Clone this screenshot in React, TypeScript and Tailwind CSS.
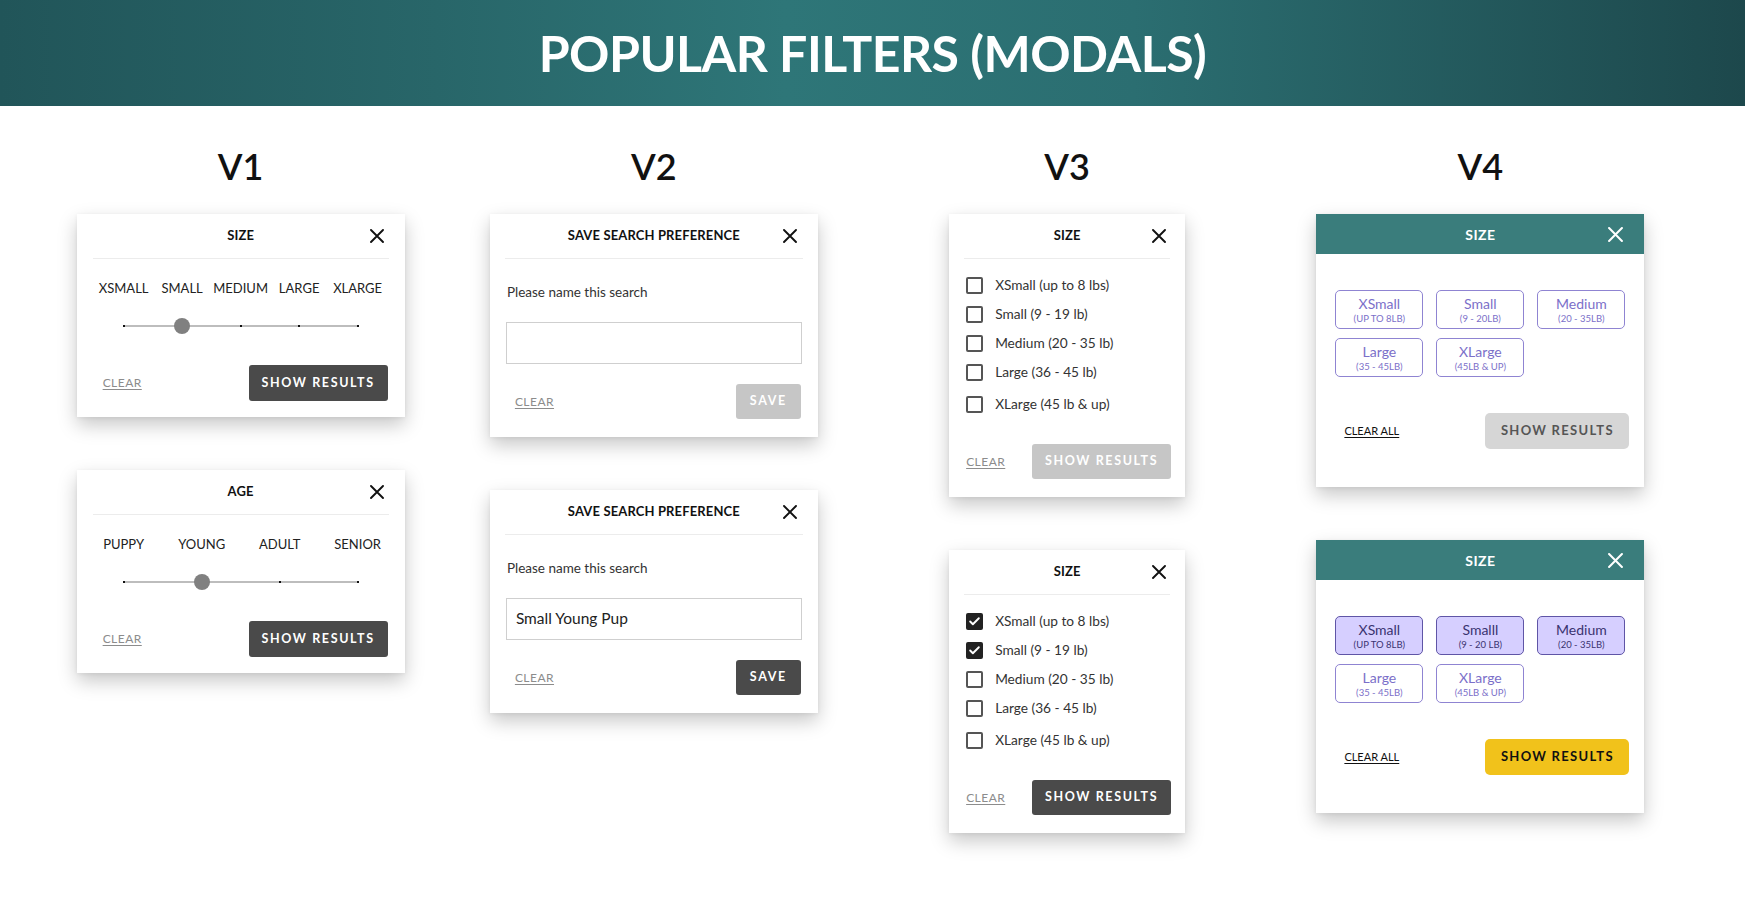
import React from 'react';
import { Check } from 'lucide-react';

const font = { fontFamily: 'Lato, "Liberation Sans", sans-serif' };

const CloseIcon = ({ className = '' }: { className?: string }) => (
  <svg viewBox="0 0 14 14" className={`w-[14px] h-[14px] ${className}`} fill="none" stroke="currentColor" strokeWidth="1.9" strokeLinecap="round">
    <path d="M1 1L13 13M13 1L1 13" />
  </svg>
);

// shared header: title centred, close icon on the right, thin divider underneath
const ModalHeader = ({ title, inset = 'mx-4', pr = 'pr-[5px]' }: { title: string; inset?: string; pr?: string }) => (
  <div className={`${inset} h-[45px] grid grid-cols-[1fr_auto_1fr] items-center border-b border-[#ececec]`}>
    <span />
    <span className="text-[13px] font-bold text-[#111] tracking-[0.01em]">{title}</span>
    <span className={`flex justify-end text-[#111] ${pr}`}>
      <CloseIcon />
    </span>
  </div>
);

const ClearLink = ({ label = 'CLEAR' }: { label?: string }) => (
  <span className="text-[12px] text-[#8c8c8c] underline underline-offset-2 tracking-[0.04em]">{label}</span>
);

const DarkButton = ({ label, disabled, className = '' }: { label: string; disabled?: boolean; className?: string }) => (
  <div
    className={`flex items-center justify-center rounded-[3px] text-[12.5px] font-bold tracking-[0.13em] text-white ${
      disabled ? 'bg-[#c6c6c6]' : 'bg-[#4a4a4a]'
    } ${className}`}
  >
    {label}
  </div>
);

const card = 'bg-white shadow-[0_8px_18px_rgba(0,0,0,0.22),0_1px_4px_rgba(0,0,0,0.06)]';

// V1 - step slider
const SliderModal = ({ title, labels, selected }: { title: string; labels: string[]; selected: number }) => (
  <div className={`w-[328px] pb-4 flex flex-col ${card}`}>
    <ModalHeader title={title} />
    <div className="mx-[47px] mt-[21px] flex justify-between text-[13px] leading-4 text-[#222]">
      {labels.map((l) => (
        <div key={l} className="w-0 flex justify-center">
          <span className="whitespace-nowrap">{l}</span>
        </div>
      ))}
    </div>
    <div className="mx-[47px] mt-[22px] h-4 relative">
      <div className="absolute inset-x-0 top-[7px] h-[2px] bg-[#bdbdbd]" />
      <div className="relative h-full flex justify-between items-center">
        {labels.map((l, i) => (
          <div key={l} className="w-0 flex justify-center">
            {i === selected ? (
              <span className="w-4 h-4 shrink-0 rounded-full bg-[#808080]" />
            ) : (
              <span className="w-[2px] h-[2px] shrink-0 bg-[#111]" />
            )}
          </div>
        ))}
      </div>
    </div>
    <div className="mt-[31px] pl-[26px] pr-[17px] flex items-center justify-between">
      <ClearLink />
      <DarkButton label="SHOW RESULTS" className="w-[139px] h-9" />
    </div>
  </div>
);

// V2 - save search
const SaveModal = ({ value }: { value?: string }) => (
  <div className={`w-[328px] pb-[18px] flex flex-col ${card}`}>
    <ModalHeader title="SAVE SEARCH PREFERENCE" inset="mx-[15px]" pr="pr-[6px]" />
    <p className="mt-[25px] ml-[17px] text-[13.5px] leading-4 text-[#333]">Please name this search</p>
    <div className="mt-[22px] mx-4 h-[42px] border border-[#cfcfcf] flex items-center pl-[9px] text-[15.5px] text-[#222]">
      {value}
    </div>
    <div className="mt-5 pl-[25px] pr-[17px] flex items-center justify-between">
      <ClearLink />
      <DarkButton label="SAVE" disabled={!value} className="w-[65px] h-[35px]" />
    </div>
  </div>
);

// V3 - checkbox list
const checkRows = ['XSmall (up to 8 lbs)', 'Small (9 - 19 lb)', 'Medium (20 - 35 lb)', 'Large (36 - 45 lb)', 'XLarge (45 lb & up)'];

const CheckModal = ({ checked }: { checked: number[] }) => (
  <div className={`w-[236px] pb-[18px] flex flex-col ${card}`}>
    <ModalHeader title="SIZE" inset="mx-[15px]" pr="pr-[4px]" />
    <div className="mt-[18px] pl-[17px] flex flex-col gap-3">
      {checkRows.map((r, i) => {
        const on = checked.includes(i);
        return (
          <div key={r} className={`flex items-center gap-3 h-[17px] ${i === 4 ? 'mt-[3px]' : ''}`}>
            {on ? (
              <span className="w-[17px] h-[17px] rounded-[2px] bg-[#222] flex items-center justify-center">
                <Check className="w-[13px] h-[13px] text-white" strokeWidth={3.5} />
              </span>
            ) : (
              <span className="w-[17px] h-[17px] rounded-[2px] border-2 border-[#555]" />
            )}
            <span className="text-[13.7px] text-[#333]">{r}</span>
          </div>
        );
      })}
    </div>
    <div className="mt-[31px] pl-[17px] pr-[14px] flex items-center justify-between">
      <ClearLink />
      <DarkButton label="SHOW RESULTS" disabled={checked.length === 0} className="w-[139px] h-[35px]" />
    </div>
  </div>
);

// V4 - chip grid
const chips = [
  { name: 'XSmall', sub: '(UP TO 8LB)' },
  { name: 'Small', sub: '(9 - 20LB)' },
  { name: 'Medium', sub: '(20 - 35LB)' },
  { name: 'Large', sub: '(35 - 45LB)' },
  { name: 'XLarge', sub: '(45LB & UP)' },
];

const ChipModal = ({ selected }: { selected: boolean }) => {
  const items = selected
    ? [
        { name: 'XSmall', sub: '(UP TO 8LB)' },
        { name: 'Smalll', sub: '(9 - 20 LB)' },
        { name: 'Medium', sub: '(20 - 35LB)' },
        chips[3],
        chips[4],
      ]
    : chips;
  return (
    <div className={`w-[328px] pb-[38px] flex flex-col ${card}`}>
      <div className="h-10 bg-[#3a7d7c] grid grid-cols-[1fr_auto_1fr] items-center">
        <span />
        <span className="text-[14px] font-bold text-white tracking-[0.03em]">SIZE</span>
        <span className="flex justify-end pr-[21px] text-white">
          <CloseIcon className="w-[15px] h-[15px]" />
        </span>
      </div>
      <div className="mt-9 px-[19px] grid grid-cols-[88px_88px_88px] gap-x-[13px] gap-y-[9px]">
        {items.map((c, i) => {
          const on = selected && i < 3;
          return (
            <div
              key={c.name}
              className={`h-[39px] rounded-[5px] border-[1.5px] flex flex-col items-center justify-center ${
                on ? 'bg-[#d6cfff] border-[#5f55a6] text-[#3a3370]' : 'bg-white border-[#8f84d2] text-[#7b6fc9]'
              }`}
            >
              <span className="text-[14px] leading-[15px]">{c.name}</span>
              <span className="text-[9.5px] leading-[11px] mt-[2px]">{c.sub}</span>
            </div>
          );
        })}
      </div>
      <div className="mt-9 pl-[28px] pr-[15px] flex items-center justify-between">
        <span className="text-[11px] text-[#111] underline underline-offset-2">CLEAR ALL</span>
        <div
          className={`w-[144px] h-9 rounded-[5px] flex items-center justify-center text-[13px] font-bold tracking-[0.1em] ${
            selected ? 'bg-[#f1c21b] text-[#111]' : 'bg-[#d6d6d6] text-[#555]'
          }`}
        >
          SHOW RESULTS
        </div>
      </div>
    </div>
  );
};

const Column = ({ label, children }: { label: string; children: React.ReactNode }) => (
  <div className="flex flex-col items-center">
    <h2 className="text-[36px] leading-9 font-semibold text-[#111]">{label}</h2>
    <div className="mt-[30px] flex flex-col gap-[53px]">{children}</div>
  </div>
);

export default function App() {
  return (
    <div className="min-h-screen bg-white" style={font}>
      <header className="h-[106px] flex items-center justify-center bg-[linear-gradient(90deg,#215559_0%,#286669_25%,#2e7678_45%,#2b6e71_65%,#1d484c_100%)]">
        <h1 className="text-[50px] leading-none font-bold text-white tracking-[-0.01em]">POPULAR FILTERS (MODALS)</h1>
      </header>
      <main className="pt-[42px] pl-[34px] pr-[58px] grid grid-cols-4">
        <Column label="V1">
          <SliderModal title="SIZE" labels={['XSMALL', 'SMALL', 'MEDIUM', 'LARGE', 'XLARGE']} selected={1} />
          <SliderModal title="AGE" labels={['PUPPY', 'YOUNG', 'ADULT', 'SENIOR']} selected={1} />
        </Column>
        <Column label="V2">
          <SaveModal />
          <SaveModal value="Small Young Pup" />
        </Column>
        <Column label="V3">
          <CheckModal checked={[]} />
          <CheckModal checked={[0, 1]} />
        </Column>
        <Column label="V4">
          <ChipModal selected={false} />
          <ChipModal selected />
        </Column>
      </main>
    </div>
  );
}
